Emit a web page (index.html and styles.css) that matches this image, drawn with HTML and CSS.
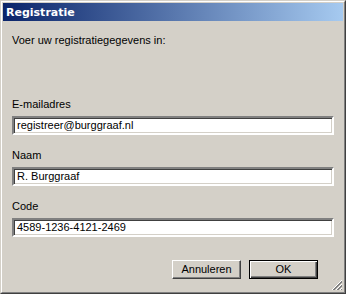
FILE: index.html
```html
<!DOCTYPE html>
<html>
<head>
<meta charset="utf-8">
<link rel="stylesheet" href="styles.css">
</head>
<body>
<div class="window">
  <div class="frame">
    <div class="titlebar"><span class="title">Registratie</span></div>
    <div class="content">
      <p class="intro">Voer uw registratiegegevens in:</p>
      <div class="fields">
        <div class="field">
          <label class="label">E-mailadres</label>
          <div class="input">registreer@burggraaf.nl</div>
        </div>
        <div class="field">
          <label class="label">Naam</label>
          <div class="input">R. Burggraaf</div>
        </div>
        <div class="field">
          <label class="label">Code</label>
          <div class="input">4589-1236-4121-2469</div>
        </div>
      </div>
      <div class="buttons">
        <div class="btn"><span class="btn-in">Annuleren</span></div>
        <div class="btn default"><span class="btn-in">OK</span></div>
      </div>
    </div>
    <svg class="grip" width="12" height="12" viewBox="0 0 12 12">
      <g stroke-width="1">
        <line x1="11" y1="1" x2="1" y2="11" stroke="#ffffff"/>
        <line x1="11" y1="2" x2="2" y2="11" stroke="#808080"/>
        <line x1="11" y1="3" x2="3" y2="11" stroke="#808080"/>
        <line x1="11" y1="5" x2="5" y2="11" stroke="#ffffff"/>
        <line x1="11" y1="6" x2="6" y2="11" stroke="#808080"/>
        <line x1="11" y1="7" x2="7" y2="11" stroke="#808080"/>
        <line x1="11" y1="9" x2="9" y2="11" stroke="#ffffff"/>
        <line x1="11" y1="10" x2="10" y2="11" stroke="#808080"/>
      </g>
    </svg>
  </div>
</div>
</body>
</html>
```
FILE: styles.css
```css
html, body {
  margin: 0;
  padding: 0;
  background: #d4d0c8;
}
.window {
  width: 346px;
  height: 294px;
  box-sizing: border-box;
  border: 1px solid;
  border-color: #d4d0c8 #404040 #404040 #d4d0c8;
  font-family: "Liberation Sans", Arial, sans-serif;
  font-size: 11px;
  color: #000;
}
.frame {
  position: relative;
  height: 100%;
  box-sizing: border-box;
  border: 1px solid;
  border-color: #ffffff #808080 #808080 #ffffff;
  padding: 1px;
  display: flex;
  flex-direction: column;
}
.titlebar {
  height: 18px;
  background: linear-gradient(to right, #0a246a, #a6caf0);
  display: flex;
  align-items: center;
  padding-left: 3px;
}
.title {
  font-family: "DejaVu Sans", Verdana, sans-serif;
  font-weight: bold;
  font-size: 11px;
  color: #fff;
  line-height: 13px;
}
.content {
  padding: 13px 9px 0 9px;
  display: flex;
  flex-direction: column;
}
.intro {
  margin: 0;
  line-height: 13px;
}
.fields {
  margin-top: 51px;
  display: flex;
  flex-direction: column;
  gap: 14px;
}
.field {
  display: flex;
  flex-direction: column;
  gap: 5px;
}
.label {
  line-height: 13px;
}
.input {
  height: 19px;
  box-sizing: border-box;
  background: #fff;
  border: 2px solid;
  border-color: #808080 #ffffff #ffffff #808080;
  box-shadow: inset 1px 1px 0 #404040, inset -1px -1px 0 #d4d0c8;
  padding: 0 3px;
  line-height: 15px;
}
.buttons {
  margin-top: 23px;
  margin-right: 16px;
  display: flex;
  justify-content: flex-end;
  gap: 8px;
}
.btn {
  width: 69px;
  height: 19px;
  box-sizing: border-box;
  border: 1px solid;
  border-color: #ffffff #404040 #404040 #ffffff;
  box-shadow: inset -1px -1px 0 #808080;
  display: flex;
  align-items: center;
  justify-content: center;
}
.btn.default {
  border: 1px solid #000;
  box-shadow: inset 1px 1px 0 #ffffff, inset -1px -1px 0 #404040, inset -2px -2px 0 #808080;
}
.btn-in {
  line-height: 13px;
}
.grip {
  position: absolute;
  right: 1px;
  bottom: 1px;
}
```
